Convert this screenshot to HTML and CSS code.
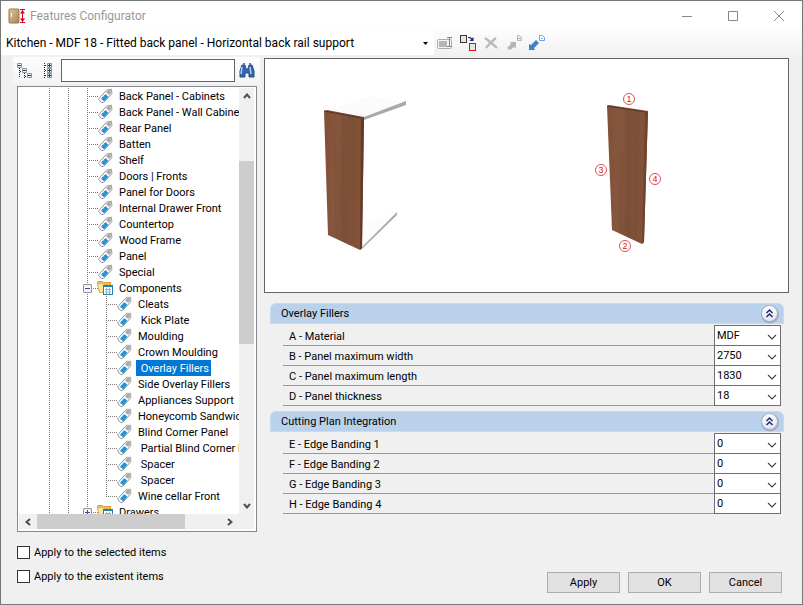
FILE: index.html
```html
<!DOCTYPE html>
<html lang="en">
<head>
<meta charset="utf-8">
<title>Features Configurator</title>
<link rel="stylesheet" href="styles.css">
</head>
<body>
<svg class="sprite" aria-hidden="true">
  <defs>
    <linearGradient id="wood" x1="0" x2="1" y1="0" y2="0.1"><stop offset="0" stop-color="#7f4f38"/><stop offset=".3" stop-color="#87563d"/><stop offset=".6" stop-color="#7c4f38"/><stop offset="1" stop-color="#835339"/></linearGradient>
    <linearGradient id="door" x1="0" x2="1" y1="0" y2="1"><stop offset="0" stop-color="#dcc6a0"/><stop offset="1" stop-color="#a98353"/></linearGradient>
    <linearGradient id="knob" x1="0" x2="0" y1="0" y2="1"><stop offset="0" stop-color="#fff"/><stop offset="1" stop-color="#e3e4ee"/></linearGradient>
  </defs>
  <symbol id="tag" viewBox="0 0 16 16">
    <path d="M1.500 11 9.500 2.200 14.500 1.200 14.800 5.800 6.500 14.500 4.500 14.500Z" fill="#fff" stroke="#929292"/>
    <path d="M9.800 2.600 14.200 1.600 14.400 5.600 12.300 7.800 8.300 4.200Z" fill="#d6d6d6"/>
    <path d="m4 10.800 4.400-4.700 3 2.600L7 13.500Z" fill="#2f9bdc"/>
    <path d="m5.600 9.600 2.800 2.400M7.300 7.800l2.800 2.400" stroke="#1674b8" stroke-width=".7"/>
    <rect x="11" y="3" width="2" height="2" fill="#fff" stroke="#777" stroke-width=".8"/>
  </symbol>
  <symbol id="folder" viewBox="0 0 16 16">
    <path d="M.5 1.500h5l1 1h7v10H2.500Z" fill="#f0c468" stroke="#d19c36"/>
    <path d="M.5 3.500h5l1 1h6.500l-1 8H2.500Z" fill="#ffe3a0" stroke="#e2b04d"/>
    <rect x="6.500" y="5.500" width="9" height="9" fill="#fff" stroke="#2482b8"/>
    <path d="M7 6.500h8" stroke="#2482b8"/><path d="M8 9.500h6M8 12h6M9.500 8v6M12.500 8v6" stroke="#86b6d4"/>
  </symbol>
  <symbol id="chevron" viewBox="0 0 10 6"><path d="m1 1 4 4 4-4" fill="none" stroke="#444" stroke-width="1.100"/></symbol>
  <symbol id="arrow" viewBox="0 0 8 6"><path d="m1 5 3-3.500L7 5" fill="none" stroke="#505050" stroke-width="2"/></symbol>
  <symbol id="collapse" viewBox="0 0 20 20">
    <circle cx="10" cy="10.500" r="9" fill="#8b94aa" opacity=".6"/>
    <circle cx="9.500" cy="9.500" r="8" fill="url(#knob)" stroke="#a8adbd"/>
    <path d="m6.500 9 3-3 3 3m-6 4 3-3 3 3" fill="none" stroke="#202f75" stroke-width="1.500"/>
  </symbol>
</svg>

<div class="window">
  <header class="titlebar">
    <svg class="app-icon" viewBox="0 0 18 18" aria-hidden="true">
      <rect x="1" y="2" width="10" height="14" rx="1" fill="url(#door)" stroke="#96764e"/>
      <rect x="3" y="6" width="1" height="4" fill="#fff"/>
      <path d="M12 2.500h5M12 15.500h5M14.500 3v12" stroke="#d9001b"/><path d="m12 6.500 2.500-3.500L17 6.500ZM12 11.500l2.500 3.500 2.500-3.500Z" fill="#d9001b"/>
    </svg>
    <h1 class="title">Features Configurator</h1>
    <button class="caption" aria-label="Minimize"><svg viewBox="0 0 12 12"><path d="M1 6.500h10"/></svg></button>
    <button class="caption" aria-label="Maximize"><svg viewBox="0 0 12 12"><path d="M1.500 1.500h9v9h-9z"/></svg></button>
    <button class="caption" aria-label="Close"><svg viewBox="0 0 12 12"><path d="m1 1 10 10M11 1 1 11"/></svg></button>
  </header>

  <div class="toolbar">
    <div class="profile">
      <select aria-label="Profile"><option>Kitchen - MDF 18 - Fitted back panel - Horizontal back rail support</option></select>
      <svg class="profile-caret" viewBox="0 0 5 3"><path d="M0 0h5L2.500 3Z"/></svg>
    </div>
    <button class="tool" aria-label="Rename"><svg viewBox="0 0 16 16"><rect x=".5" y="4.500" width="14" height="9" rx="1" fill="#f4f4f4" stroke="#adadad"/><rect x="2" y="6" width="8" height="6" fill="#b5b5b5"/><path d="M10 2.500h5M10 11.500h5M12.500 3v8" stroke="#858585"/></svg></button>
    <button class="tool" aria-label="Copy"><svg viewBox="0 0 16 16"><rect x=".5" y=".5" width="6" height="7" fill="#e5e5e8" stroke="#443338"/><path d="M8 2.500h2l3 3" fill="none" stroke="#102378" stroke-width="1.200"/><path d="M13.500 2v4h-4Z" fill="#102378"/><rect x="9.500" y="8.500" width="6" height="7" fill="#e7e4e8" stroke="#f00808"/></svg></button>
    <button class="tool" aria-label="Delete"><svg viewBox="0 0 16 16"><path d="M2 3c4 3 8 6 12 10M13 3C9 6 6 9 3 13" fill="none" stroke="#b9b9b9" stroke-width="2.200"/></svg></button>
    <button class="tool" aria-label="Export"><svg viewBox="0 0 16 16"><path d="m1 13 4-4-1-2h6v6l-2-1-4 3Z" fill="#b5b5b5"/><path d="M11.500.5h2l2 2v3h-4ZM12 3.500h3" fill="#eee" stroke="#b8b8b8"/></svg></button>
    <button class="tool" aria-label="Import"><svg viewBox="0 0 16 16"><path d="M0 15V9l2 1 5-5 3 3-5 5 1 2Z" fill="#3c80cf"/><path d="M10.500.5h3l2 2v3h-5ZM12 3.500h2" fill="#fff" stroke="#6ca5e5"/></svg></button>
  </div>

  <main class="content">
    <aside class="browser">
      <div class="search">
        <button class="tool" aria-label="Collapse all"><svg viewBox="0 0 16 16"><path d="M2.500 5v10M3 8.500h3M7.500 10v5M8 13.500h3" fill="none" stroke="#222" stroke-dasharray="1 1"/><g fill="#edf4f7" stroke="#80949f"><path d="M.5.5h4v4h-4zM5.500 5.500h4v4h-4zM10.500 10.500h4v4h-4z"/></g><path d="M1 2.500h3M6 7.500h3M11 12.500h3" stroke="#253f51"/></svg></button>
        <button class="tool" aria-label="Expand all"><svg viewBox="0 0 16 16"><path d="M4.500 0v16M5 2.500h3M5 7.500h3M5 12.500h3" fill="none" stroke="#222" stroke-dasharray="1 1"/><g fill="#edf4f7" stroke="#80949f"><path d="M7.500.5h4v4h-4zM7.500 5.500h4v4h-4zM7.500 10.500h4v4h-4z"/></g><path d="M8 2.500h3M9.500 1v3M8 7.500h3M9.500 6v3M8 12.500h3M9.500 11v3" stroke="#253f51"/></svg></button>
        <input type="text" aria-label="Search features">
        <button class="tool" aria-label="Find"><svg viewBox="0 0 16 16"><path d="M3 2h3l1 4h2l1-4h3l2 6v6h-5v-4H6v4H1V8Z" fill="#3563ac" stroke="#294c8c"/><path d="M3 4 2 11M11 4l1 7" stroke="#b9d0ee" stroke-width="1.500"/><path d="M4 1h2M10 1h2" stroke="#5b81b9" stroke-width="2"/></svg></button>
      </div>

      <div class="tree">
        <div class="tree-view">
          <ul class="level root">
            <li><span class="node"><svg><use href="#tag"/></svg><span>Back Panel - Cabinets</span></span></li>
            <li><span class="node"><svg><use href="#tag"/></svg><span>Back Panel - Wall Cabinets</span></span></li>
            <li><span class="node"><svg><use href="#tag"/></svg><span>Rear Panel</span></span></li>
            <li><span class="node"><svg><use href="#tag"/></svg><span>Batten</span></span></li>
            <li><span class="node"><svg><use href="#tag"/></svg><span>Shelf</span></span></li>
            <li><span class="node"><svg><use href="#tag"/></svg><span>Doors | Fronts</span></span></li>
            <li><span class="node"><svg><use href="#tag"/></svg><span>Panel for Doors</span></span></li>
            <li><span class="node"><svg><use href="#tag"/></svg><span>Internal Drawer Front</span></span></li>
            <li><span class="node"><svg><use href="#tag"/></svg><span>Countertop</span></span></li>
            <li><span class="node"><svg><use href="#tag"/></svg><span>Wood Frame</span></span></li>
            <li><span class="node"><svg><use href="#tag"/></svg><span>Panel</span></span></li>
            <li><span class="node"><svg><use href="#tag"/></svg><span>Special</span></span></li>
            <li>
              <span class="node"><button class="toggle open" aria-label="Collapse Components"></button><svg><use href="#folder"/></svg><span>Components</span></span>
              <ul class="level">
                <li><span class="node"><svg><use href="#tag"/></svg><span>Cleats</span></span></li>
                <li><span class="node"><svg><use href="#tag"/></svg><span>&nbsp;Kick Plate</span></span></li>
                <li><span class="node"><svg><use href="#tag"/></svg><span>Moulding</span></span></li>
                <li><span class="node"><svg><use href="#tag"/></svg><span>Crown Moulding</span></span></li>
                <li><span class="node selected"><svg><use href="#tag"/></svg><span>&nbsp;Overlay Fillers</span></span></li>
                <li><span class="node"><svg><use href="#tag"/></svg><span>Side Overlay Fillers</span></span></li>
                <li><span class="node"><svg><use href="#tag"/></svg><span>Appliances Support</span></span></li>
                <li><span class="node"><svg><use href="#tag"/></svg><span>Honeycomb Sandwich</span></span></li>
                <li><span class="node"><svg><use href="#tag"/></svg><span>Blind Corner Panel</span></span></li>
                <li><span class="node"><svg><use href="#tag"/></svg><span>&nbsp;Partial Blind Corner Panel</span></span></li>
                <li><span class="node"><svg><use href="#tag"/></svg><span>&nbsp;Spacer</span></span></li>
                <li><span class="node"><svg><use href="#tag"/></svg><span>&nbsp;Spacer</span></span></li>
                <li><span class="node"><svg><use href="#tag"/></svg><span>Wine cellar Front</span></span></li>
              </ul>
            </li>
            <li><span class="node"><button class="toggle" aria-label="Expand Drawers"></button><svg><use href="#folder"/></svg><span>Drawers</span></span></li>
          </ul>
        </div>
        <div class="scroll vertical">
          <svg><use href="#arrow"/></svg>
          <div class="track"><div class="thumb"></div></div>
          <svg class="down"><use href="#arrow"/></svg>
        </div>
        <div class="scroll horizontal">
          <svg class="left"><use href="#arrow"/></svg>
          <div class="track"><div class="thumb"></div></div>
          <svg class="right"><use href="#arrow"/></svg>
        </div>
        <div class="scroll"></div>
      </div>
    </aside>

    <section class="details">
      <div class="preview">
        <svg viewBox="0 0 523 233" role="img" aria-label="Overlay filler preview">
          <path d="m60 52 45-15 37 6-43 18Z" fill="#fbfbfb"/>
          <path d="m99 58 42-16v4l-42 15Z" fill="#a9a9a9"/>
          <path d="m98 166 35-14-35 36Z" fill="#fcfcfc"/>
          <path d="m97 188 35-35v3l-35 34Z" fill="#aaa"/>
          <path d="m59 52 3-1 37 7-2 131-2 2-32-15Z" fill="url(#wood)"/>
          <path d="m99 58-2 131-2 2 1-132Z" fill="#64392a"/>
          <path d="m59 52 37 7" stroke="#51301f"/>
          <path d="m69 55 2 122m7-120 1 124m9-122 0 125" stroke="#6b402e" opacity=".2"/>
          <path d="m342 47 2-1 39 6-4 131-2 2-30-14Z" fill="url(#wood)"/>
          <path d="m383 52-4 131-2 2 3-132Z" fill="#6e432f"/>
          <path d="m342 47 39 6" stroke="#573321"/>
          <path d="m353 50 2 122m8-120 0 125m9-122-1 125" stroke="#694331" opacity=".2"/>
          <g class="marks"><circle cx="364" cy="40" r="5.500"/><circle cx="360" cy="187" r="5.500"/><circle cx="336" cy="111" r="5.500"/><circle cx="390" cy="120" r="5.500"/></g>
          <g class="mark-text"><text x="364" y="43">1</text><text x="360" y="190">2</text><text x="336" y="114">3</text><text x="390" y="123">4</text></g>
        </svg>
      </div>

      <section class="group">
        <h2>Overlay Fillers<button aria-label="Collapse Overlay Fillers"><svg><use href="#collapse"/></svg></button></h2>
        <div class="fields">
          <div class="field"><label for="a">A - Material</label><div class="drop"><select id="a"><option>MDF</option></select><svg><use href="#chevron"/></svg></div></div>
          <div class="field"><label for="b">B - Panel maximum width</label><div class="drop"><select id="b"><option>2750</option></select><svg><use href="#chevron"/></svg></div></div>
          <div class="field"><label for="c">C - Panel maximum length</label><div class="drop"><select id="c"><option>1830</option></select><svg><use href="#chevron"/></svg></div></div>
          <div class="field"><label for="d">D - Panel thickness</label><div class="drop"><select id="d"><option>18</option></select><svg><use href="#chevron"/></svg></div></div>
        </div>
      </section>
      <section class="group">
        <h2>Cutting Plan Integration<button aria-label="Collapse Cutting Plan Integration"><svg><use href="#collapse"/></svg></button></h2>
        <div class="fields">
          <div class="field"><label for="e">E - Edge Banding 1</label><div class="drop"><select id="e"><option>0</option></select><svg><use href="#chevron"/></svg></div></div>
          <div class="field"><label for="f">F - Edge Banding 2</label><div class="drop"><select id="f"><option>0</option></select><svg><use href="#chevron"/></svg></div></div>
          <div class="field"><label for="g">G - Edge Banding 3</label><div class="drop"><select id="g"><option>0</option></select><svg><use href="#chevron"/></svg></div></div>
          <div class="field"><label for="h">H - Edge Banding 4</label><div class="drop"><select id="h"><option>0</option></select><svg><use href="#chevron"/></svg></div></div>
        </div>
      </section>
    </section>
  </main>

  <footer class="footer">
    <div class="options">
      <label><input type="checkbox">Apply to the selected items</label>
      <label><input type="checkbox">Apply to the existent items</label>
    </div>
    <div class="actions"><button>Apply</button><button>OK</button><button>Cancel</button></div>
  </footer>
</div>
</body>
</html>
```
FILE: styles.css
```css
* { box-sizing: border-box; }
body { margin: 0; font: 11px/16px Roboto, "Liberation Sans", sans-serif; color: #000; }
button, input, select { font: inherit; color: inherit; margin: 0; padding: 0; border: 0; border-radius: 0; background: none; }
svg { display: block; }
.sprite { position: absolute; width: 0; height: 0; }

.window { display: flex; flex-direction: column; height: 100vh; border: 1px solid #777; background: #f0f0f0; }
.titlebar { display: flex; align-items: center; height: 29px; padding-left: 7px; background: #fff; }
.app-icon { width: 18px; height: 18px; }
.title { flex: 1; margin: 0 0 0 4px; font: 12px/16px Roboto, sans-serif; color: #999; }
.caption { display: flex; justify-content: center; width: 46px; }
.caption svg { width: 12px; height: 12px; fill: none; stroke: #888; }

.toolbar { display: flex; height: 27px; padding-top: 1px; background: linear-gradient(#fdfdfd, #f0f0f0); }
.profile { position: relative; width: 54%; height: 24px; background: #fff; }
.profile select { width: 100%; height: 24px; padding-left: 5px; appearance: none; font: 12px/16px Roboto, sans-serif; }
.profile-caret { position: absolute; right: 6px; top: 11px; width: 5px; height: 3px; }
.tool { display: flex; align-items: center; justify-content: center; width: 23px; height: 24px; }
.tool svg { width: 16px; height: 16px; }

.content { display: flex; flex: 1; min-height: 0; padding: 0 13px 0 16px; gap: 7px; }
.browser { display: flex; flex-direction: column; width: 240px; flex: none; }
.search { display: flex; align-items: center; height: 27px; margin: 0 -3px 2px -4px; padding-right: 2px; background: linear-gradient(#fdfdfd, #f3f3f3); }
.search input { flex: 1; min-width: 0; height: 23px; margin-left: 2px; padding: 0 4px; border: 1px solid #646464; background: #fff; }

.tree { display: grid; grid-template-columns: 1fr 15px; grid-template-rows: 1fr 15px; flex: 1; min-height: 0; padding: 1px 2px 2px 1px; border: 1px solid #828790; background: #fff; }
.tree-view { overflow: hidden; min-width: 0; min-height: 0; }
.level { margin: 0; padding: 0 0 0 19px; list-style: none; }
.root {
  padding-left: 68px;
  background:
    repeating-linear-gradient(#777 0 1px, transparent 1px 2px) 30px 0 / 1px 100% no-repeat,
    repeating-linear-gradient(#777 0 1px, transparent 1px 2px) 49px 0 / 1px 100% no-repeat;
}
.level > li { background: repeating-linear-gradient(#777 0 1px, transparent 1px 2px) 0 0 / 1px 100% no-repeat; }
.level .level > li:last-child { background-size: 1px 9px; }
.node { display: flex; align-items: center; position: relative; height: 16px; padding-left: 10px; white-space: nowrap; background: repeating-linear-gradient(to right, #777 0 1px, transparent 1px 2px) 0 8px / 11px 1px no-repeat; }
.node svg { width: 16px; height: 16px; flex: none; }
.node > span { margin-left: 4px; padding: 2px 2px 0; line-height: 14px; }
.selected > span { background: #0078d7; color: #fff; }
.toggle { position: absolute; left: -4px; top: 4px; width: 9px; height: 9px; border: 1px solid #919191; border-radius: 1px; background: linear-gradient(#33518f, #33518f) center / 5px 1px no-repeat, linear-gradient(#33518f, #33518f) center / 1px 5px no-repeat, #f4f4f4; }
.toggle.open { background: linear-gradient(#33518f, #33518f) center / 5px 1px no-repeat, #f4f4f4; }

.scroll { display: flex; align-items: center; background: #f0f0f0; }
.scroll svg { width: 8px; height: 6px; margin: 5px; flex: none; }
.vertical { flex-direction: column; }
.track { display: flex; flex: 1; align-self: stretch; }
.vertical .track { flex-direction: column; }
.vertical .track::before { content: ""; flex: 57; }
.vertical .thumb { flex: 182; background: #cdcdcd; }
.vertical .track::after { content: ""; flex: 154; }
.horizontal .thumb { flex: 148; background: #cdcdcd; }
.horizontal .track::after { content: ""; flex: 36; }
.down { transform: rotate(180deg); }
.left { transform: rotate(-90deg); }
.right { transform: rotate(90deg); }

.details { flex: 1; min-width: 0; padding-top: 1px; }
.preview { margin-bottom: 10px; border: 1px solid #646464; background: #fff; }
.preview svg { width: 100%; }
.marks { fill: #fff; stroke: #e05050; }
.mark-text { font: 9px "Liberation Sans", sans-serif; fill: #d82020; text-anchor: middle; }
.group { margin: 0 5px 5px 6px; }
.group h2 { display: flex; align-items: center; justify-content: space-between; height: 21px; margin: 0 0 2px; padding: 0 3px 0 10px; border: 1px solid #c8daef; border-radius: 6px 6px 0 0; background: #b9d1ea; font: inherit; }
.group h2 svg { width: 20px; height: 20px; }
.fields { margin: 0 3px 0 13px; }
.field { display: flex; height: 20px; border-bottom: 1px solid #999; }
.field label { flex: 1; padding: 3px 6px 0; }
.drop { position: relative; width: 67px; height: 21px; margin-top: -1px; border: 1px solid #707070; background: #fff; }
.drop select { width: 100%; height: 19px; padding-left: 2px; appearance: none; }
.drop svg { position: absolute; right: 3px; top: 8px; width: 10px; height: 6px; pointer-events: none; }

.footer { display: flex; justify-content: space-between; align-items: flex-end; height: 72px; padding: 0 20px 11px 16px; }
.options { display: flex; flex-direction: column; gap: 6px; height: 49px; }
.options label { display: flex; align-items: center; gap: 4px; height: 18px; flex: none; }
.options input { appearance: none; width: 13px; height: 13px; margin-bottom: 2px; border: 1px solid #333; background: #fff; }
.options input:checked { background: #0078d7; }
.actions { display: flex; gap: 8px; }
.actions button { width: 73px; height: 21px; border: 1px solid #adadad; background: #e1e1e1; }
```
